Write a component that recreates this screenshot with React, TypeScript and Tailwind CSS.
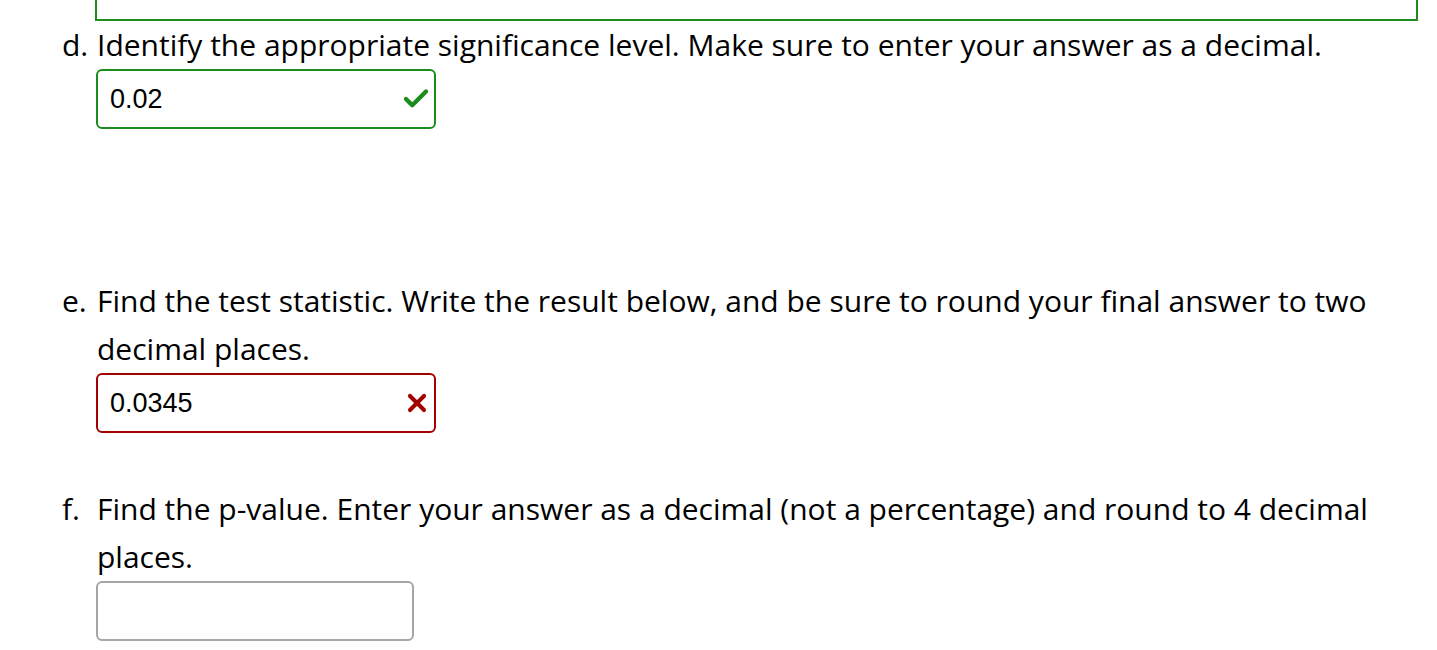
import { Check, X } from "lucide-react";

const Answer = ({
  value,
  status,
  width = "w-[340px]",
}: {
  value?: string;
  status?: "ok" | "bad";
  width?: string;
}) => {
  const border =
    status === "ok"
      ? "border-[#1c8c1c]"
      : status === "bad"
      ? "border-[#a30000]"
      : "border-[#a6a6a6]";
  return (
    <div
      className={`${width} -ml-[1px] h-[60px] border-2 ${border} rounded-[6px] flex items-center justify-between pl-[12px] pr-[3px] bg-white`}
    >
      <span className="text-[27px] leading-none text-black font-['Liberation_Sans',Arial,sans-serif]">
        {value}
      </span>
      {status === "ok" && <Check className="w-[30px] h-[30px] text-[#1c8c1c]" strokeWidth={3.5} />}
      {status === "bad" && <X className="w-[28px] h-[28px] text-[#a30000]" strokeWidth={3.5} />}
    </div>
  );
};

const Item = ({ label, children }: { label: string; children: React.ReactNode }) => (
  <div className="flex">
    <span className="w-[35px] shrink-0 whitespace-nowrap">{label}</span>
    <div className="flex-1">{children}</div>
  </div>
);

export default function App() {
  return (
    <div className="w-[1437px] h-[650px] overflow-hidden bg-white font-['Open_Sans',sans-serif] text-[30px] leading-[48px] text-black">
      <div className="ml-[95px] w-[1323px] h-[21px] border-2 border-t-0 border-[#1c8c1c]" />
      <div className="pl-[62px] pr-[20px]">
        <Item label="d.">
          <p>Identify the appropriate significance level. Make sure to enter your answer as a decimal.</p>
          <Answer value="0.02" status="ok" />
        </Item>
        <div className="h-[148px]" />
        <Item label="e.">
          <p>Find the test statistic. Write the result below, and be sure to round your final answer to two decimal places.</p>
          <Answer value="0.0345" status="bad" />
        </Item>
        <div className="h-[52px]" />
        <Item label="f.">
          <p>Find the p-value. Enter your answer as a decimal (not a percentage) and round to 4 decimal places.</p>
          <Answer width="w-[318px]" />
        </Item>
      </div>
    </div>
  );
}
